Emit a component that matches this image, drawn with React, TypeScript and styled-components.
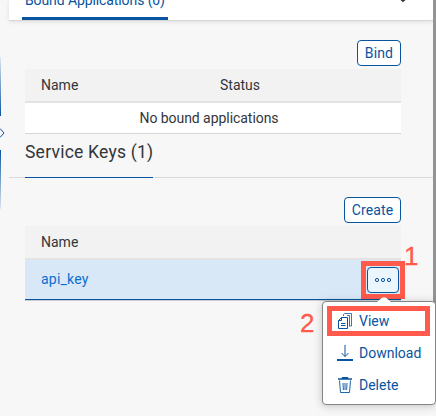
import React from "react";
import styled, { createGlobalStyle } from "styled-components";

const GlobalStyle = createGlobalStyle`
  * { box-sizing: border-box; }
  body {
    margin: 0;
    background: #f7f7f7;
    color: #32363a;
    font: 14px/16px Roboto, "Liberation Sans", sans-serif;
    overflow: hidden;
  }
`;

const Page = styled.div`
  position: relative;
  display: flex;
  width: 436px;
  height: 416px;
  overflow: hidden;
  background: #f7f7f7;
`;

const Splitter = styled.div`
  width: 9px;
  flex: none;
  display: flex;
  flex-direction: column;
  padding-top: 57px;
`;

const SplitterLine = styled.div<{ $direction: string }>`
  width: 1px;
  height: 59px;
  background: linear-gradient(${(p) => p.$direction}, #dfe8f1, #0854a0);
`;

const SplitterGrip = styled.svg`
  display: block;
  width: 6px;
  height: 34px;
`;

const Content = styled.main`
  width: 424px;
  flex: none;
`;

const ScrollEdge = styled.div`
  width: 3px;
  height: 346px;
  background: #949494;
`;

const TabBar = styled.header`
  height: 21px;
  display: flex;
  justify-content: space-between;
  background: #fff;
  border-bottom: 1px solid #d5d7d7;
  box-shadow: 0 1px 4px rgba(0, 0, 0, 0.1);
`;

const Tab = styled.div`
  width: 146px;
  height: 20px;
  margin-left: 13px;
  padding-left: 3px;
  border-bottom: 3px solid #0854a0;
  color: #0854a0;
  white-space: nowrap;
  line-height: 16px;
  letter-spacing: -0.1px;

  span {
    display: block;
    margin-top: -8px;
  }
`;

const Chevron = styled.svg`
  width: 8px;
  height: 3px;
  margin-right: 26px;
`;

const Section = styled.section`
  padding: 0 32px 0 16px;
`;

const Toolbar = styled.div`
  display: flex;
  justify-content: flex-end;
  padding: 19px 0 3px;
`;

const Button = styled.button<{ $width: number }>`
  width: ${(p) => p.$width}px;
  height: 26px;
  padding: 0;
  border: 1px solid #0854a0;
  border-radius: 4px;
  background: #fff;
  color: #0854a0;
  font: inherit;
  letter-spacing: 0.15px;
`;

const HeadRow = styled.div`
  height: 34px;
  display: grid;
  grid-template-columns: 179px 1fr;
  align-items: center;
  padding-left: 16px;
  background: #f2f2f2;
  border-bottom: 2px solid #e3e3e3;
`;

const EmptyRow = styled.div`
  height: 31px;
  display: flex;
  align-items: center;
  justify-content: center;
  padding-right: 8px;
  background: #fff;
  border-bottom: 1px solid #d7d7d7;
  letter-spacing: -0.05px;
`;

const TitleBar = styled.div`
  height: 44px;
  padding-left: 16px;
  border-bottom: 1px solid #d9d9d9;
`;

const Title = styled.h2`
  width: 128px;
  height: 44px;
  margin: 0;
  border-bottom: 1px solid #0854a0;
  font-size: 17.5px;
  font-weight: 400;
  line-height: 37px;
  letter-spacing: 0.23px;
  white-space: nowrap;
`;

const KeyRow = styled.div`
  height: 41px;
  display: flex;
  align-items: center;
  justify-content: space-between;
  padding: 0 2px 0 16px;
  background: #d9e8f6;
  border-bottom: 1px solid #c9cdd1;
  box-shadow: inset 0 -1px #0854a0;
`;

const KeyLink = styled.a`
  padding-bottom: 2px;
  color: #0a6ed1;
  letter-spacing: 0.22px;
`;

const MoreButton = styled.button`
  width: 32px;
  height: 26px;
  padding: 0;
  border: 1px solid #0854a0;
  border-radius: 4px;
  background: #ebf5fe;
  display: grid;
  place-items: center;
`;

const Popover = styled.div`
  position: absolute;
  left: 322px;
  top: 301px;
  width: 114px;
  height: 104px;
  padding: 3px 4px 5px;
  background: #fff;
  border: 1px solid #858585;
  border-radius: 4px;
  box-shadow: 0 1px 8px rgba(0, 0, 0, 0.22);
`;

const PopoverArrow = styled.svg`
  position: absolute;
  left: 53px;
  top: -5px;
`;

const MenuItem = styled.div`
  height: 32px;
  display: flex;
  align-items: center;
  gap: 6px;
  padding-left: 10px;
  color: #0854a0;
`;

const Highlight = styled.div<{ $x: number; $y: number; $w: number; $h: number }>`
  position: absolute;
  left: ${(p) => p.$x}px;
  top: ${(p) => p.$y}px;
  width: ${(p) => p.$w}px;
  height: ${(p) => p.$h}px;
  border: 5px solid #ff5a4b;
`;

const StepNumber = styled.span<{ $x: number; $y: number }>`
  position: absolute;
  left: ${(p) => p.$x}px;
  top: ${(p) => p.$y}px;
  color: #ff5a4b;
  font: 26px/26px "Liberation Sans", sans-serif;
  -webkit-text-stroke: 0.3px #ff5a4b;
`;

const iconProps = { width: 16, height: 16, viewBox: "0 0 16 16", fill: "none", stroke: "#0854a0" };

const CopyIcon = () => (
  <svg {...iconProps}>
    <path d="M4.500 4.500h6v11h-9v-8zM4.500 4.500v3h-3" />
    <path d="M4 10.500h4.500M4 12.500h4.500" />
    <path d="M6.500 3V1.500L7.500.5h7v12.500H12M10 2.500h2.500v10.500" strokeWidth=".8" />
  </svg>
);

const DownloadIcon = () => (
  <svg {...iconProps}>
    <path d="M8 0v11.500M4.500 8L8 11.500L11.500 8" />
    <path d="M0 15h16" strokeWidth="2" />
  </svg>
);

const TrashIcon = () => (
  <svg {...iconProps}>
    <path d="M1 2h14M5.500 1.500V.7h5v.8" strokeWidth="1.4" />
    <path d="M2.500 3.500l1 12h9l1-12M6 6l.4 7M8 6v7M10 6l-.4 7" strokeWidth=".9" />
  </svg>
);

export default function App() {
  return (
    <Page>
      <GlobalStyle />
      <Splitter>
        <SplitterLine $direction="to bottom" />
        <SplitterGrip viewBox="0 0 6 34" fill="none" stroke="#0854a0">
          <path d="M0 12.500L4 17L0 21.500" />
        </SplitterGrip>
        <SplitterLine $direction="to top" />
      </Splitter>
      <Content>
        <TabBar>
          <Tab><span>Bound Applications (0)</span></Tab>
          <Chevron viewBox="0 0 8 3" fill="none" stroke="#32363a" strokeWidth="1.5">
            <path d="M1.500 -1L4 1.300L6.500 -1" />
          </Chevron>
        </TabBar>
        <Section>
          <Toolbar><Button $width={44}>Bind</Button></Toolbar>
          <HeadRow><span>Name</span><span>Status</span></HeadRow>
          <EmptyRow>No bound applications</EmptyRow>
        </Section>
        <TitleBar><Title>Service Keys (1)</Title></TitleBar>
        <Section>
          <Toolbar><Button $width={57}>Create</Button></Toolbar>
          <HeadRow><span>Name</span></HeadRow>
          <KeyRow>
            <KeyLink>api_key</KeyLink>
            <MoreButton aria-label="More actions">
              <svg width="18" height="6" viewBox="0 0 18 6" fill="none" stroke="#0854a0">
                <circle cx="3" cy="3" r="1.600" />
                <circle cx="9" cy="3" r="1.600" />
                <circle cx="15" cy="3" r="1.600" />
              </svg>
            </MoreButton>
          </KeyRow>
        </Section>
      </Content>
      <ScrollEdge />
      <Highlight $x={361} $y={261} $w={44} $h={38} />
      <Popover>
        <PopoverArrow width="16" height="6" viewBox="0 0 16 6">
          <path d="M0 6L6 .8Q8 -.5 10 .8L16 6z" fill="#fff" />
        </PopoverArrow>
        <MenuItem><CopyIcon />View</MenuItem>
        <MenuItem><DownloadIcon />Download</MenuItem>
        <MenuItem><TrashIcon />Delete</MenuItem>
      </Popover>
      <Highlight $x={327} $y={306} $w={103} $h={30} />
      <StepNumber $x={404} $y={243}>1</StepNumber>
      <StepNumber $x={300} $y={310}>2</StepNumber>
    </Page>
  );
}
